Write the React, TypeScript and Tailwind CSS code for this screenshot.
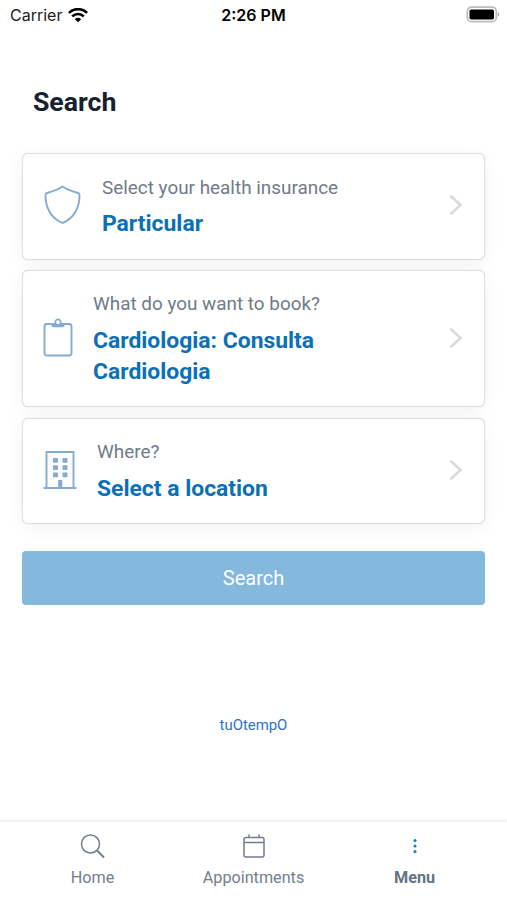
import type { ReactNode } from "react";

function Chevron() {
  return (
    <svg width="16" height="22" viewBox="0 0 16 22" fill="none" stroke="#dadada" strokeWidth="2.6" className="shrink-0">
      <path d="M2.500 1.800 L12.500 11 L2.500 20.200" />
    </svg>
  );
}

function ShieldIcon() {
  return (
    <svg width="39" height="40" viewBox="0 0 39 40" fill="none" stroke="#84abd0" strokeWidth="1.9" strokeLinejoin="round" className="shrink-0">
      <path d="M19.500 1.500 C15 4.500 9.500 6.600 4 8 Q2.500 8.400 2.500 9.900 C2.300 22.500 8.300 33.200 18.300 37.500 Q19.500 38 20.700 37.500 C30.700 33.200 36.700 22.500 36.500 9.900 Q36.500 8.400 35 8 C29.500 6.600 24 4.500 19.500 1.500 Z" />
    </svg>
  );
}

function ClipboardIcon() {
  return (
    <svg width="30" height="40" viewBox="0 0 30 40" fill="none" stroke="#84abd0" strokeWidth="1.9" className="shrink-0">
      <rect x="1.500" y="6" width="27" height="31.500" rx="2.500" />
      <path d="M8.500 5.500 H11.300 C11 -1.300 19 -1.300 18.700 5.500 H21.500 V7.500 Q21.500 9.300 19.700 9.300 H10.300 Q8.500 9.300 8.500 7.500 Z" fill="#84abd0" stroke="none" />
      <circle cx="15" cy="4.200" r="1.900" fill="#ffffff" stroke="none" />
    </svg>
  );
}

function BuildingIcon() {
  return (
    <svg width="34" height="40" viewBox="0 0 34 40" fill="none" stroke="#84abd0" strokeWidth="1.9" className="shrink-0">
      <path d="M3.500 37.500 V2 H30.500 V37.500 M0.500 38 H33.500" />
      <g fill="#84abd0" stroke="none">
        <rect x="10" y="8" width="5" height="4.800" rx="0.800" />
        <rect x="19.500" y="8" width="5" height="4.800" rx="0.800" />
        <rect x="10" y="15.300" width="5" height="4.800" rx="0.800" />
        <rect x="19.500" y="15.300" width="5" height="4.800" rx="0.800" />
        <rect x="10" y="22.500" width="5" height="4.800" rx="0.800" />
        <rect x="19.500" y="22.500" width="5" height="4.800" rx="0.800" />
        <rect x="15.200" y="30" width="4" height="8" />
      </g>
    </svg>
  );
}

function WifiIcon() {
  return (
    <svg width="20" height="15" viewBox="0 0 20 15" fill="none" stroke="#000000" strokeWidth="2.700">
      <path d="M0.900 4.900 C6 -0.100 14 -0.100 19.100 4.900" />
      <path d="M4.200 8.400 C7.500 5.200 12.500 5.200 15.800 8.400" />
      <path d="M10 14.300 L6.800 11.200 C8.600 9.400 11.400 9.400 13.200 11.200 Z" fill="#000000" stroke="none" />
    </svg>
  );
}

function BatteryIcon() {
  return (
    <svg width="34" height="18" viewBox="0 0 34 18" fill="none">
      <rect x="1.300" y="1.100" width="29" height="14.600" rx="4.200" stroke="#bcbcbc" strokeWidth="1.700" />
      <rect x="3.500" y="3.400" width="24.500" height="10" rx="1.600" fill="#000000" />
      <path d="M31.800 6.100 C33.700 7 33.700 9.800 31.800 10.700 Z" fill="#aaaaaa" />
    </svg>
  );
}

type CardProps = { icon: ReactNode; label: string; value: string };

function OptionCard({ icon, label, value }: CardProps) {
  return (
    <button className="flex w-full items-center gap-[20px] rounded-md border border-[#dfdfdf] bg-white pt-[17.500px] pr-[19.600px] pb-[19.500px] pl-[19.600px] text-left shadow-[0_4px_18px_rgba(0,0,0,0.05),0_0_1px_rgba(0,0,0,0.15)]">
      {icon}
      <span className="flex flex-1 flex-col gap-[5.500px]">
        <span className="text-[18.900px] leading-[31px] text-[#717b88]">{label}</span>
        <span className="max-w-[260px] text-[22.900px] leading-[31px] font-bold text-[#0b70b5]">{value}</span>
      </span>
      <Chevron />
    </button>
  );
}

export default function App() {
  return (
    <div className="flex h-[900px] w-[507px] flex-col bg-white font-[Roboto,sans-serif]">
      <header className="grid h-[30px] grid-cols-3 items-center font-[Inter,sans-serif] text-[16px] text-[#222]">
        <div className="flex items-center gap-[6px] pl-[10px]">
          <span>Carrier</span>
          <WifiIcon />
        </div>
        <span className="text-center font-semibold text-black">2:26 PM</span>
        <div className="flex justify-end pr-[7px]">
          <BatteryIcon />
        </div>
      </header>

      <main className="flex flex-1 flex-col px-[22.400px] pt-[51.500px]">
        <h1 className="pl-[10.500px] text-[26.700px] leading-[40px] font-bold text-[#18222f]">Search</h1>
        <section className="flex flex-col gap-[10.300px] pt-[31.500px]">
          <OptionCard icon={<ShieldIcon />} label="Select your health insurance" value="Particular" />
          <OptionCard icon={<ClipboardIcon />} label="What do you want to book?" value="Cardiologia: Consulta Cardiologia" />
          <OptionCard icon={<BuildingIcon />} label="Where?" value="Select a location" />
        </section>
        <button className="mt-[27px] h-[54px] w-full rounded bg-[#84b8dc] text-[20px] text-white">Search</button>
        <a className="mt-[110px] text-center text-[14.900px] leading-[20px] text-[#2e70cb]">tuOtempO</a>
      </main>

      <nav className="flex h-[79px] justify-center border-t border-[#f1f1f1] pt-[10px] text-[16.200px] leading-[24px] text-[#747e8d] shadow-[0_-1px_3px_rgba(0,0,0,0.08)]">
        <div className="flex w-[161px] flex-col items-center gap-[6px]">
          <svg width="26" height="28" viewBox="0 0 26 28" fill="none" stroke="#747e8d" strokeWidth="1.500">
            <circle cx="10.500" cy="12" r="9" />
            <path d="M17 18.500 L24 25.500" strokeWidth="2" />
          </svg>
          <span>Home</span>
        </div>
        <div className="flex w-[161px] flex-col items-center gap-[6px]">
          <svg width="24" height="28" viewBox="0 0 24 28" fill="none" stroke="#747e8d" strokeWidth="1.500">
            <rect x="2" y="5.500" width="20" height="19.500" rx="2" />
            <path d="M2 10.500 H22 M7 2.500 V5.500 M17 2.500 V5.500" />
          </svg>
          <span>Appointments</span>
        </div>
        <div className="flex w-[161px] flex-col items-center gap-[6px] font-bold">
          <svg width="24" height="28" viewBox="0 0 24 28" fill="#0b7cbd">
            <circle cx="12" cy="8.500" r="1.500" />
            <circle cx="12" cy="14" r="1.500" />
            <circle cx="12" cy="19.500" r="1.500" />
          </svg>
          <span className="text-[#667381]">Menu</span>
        </div>
      </nav>
    </div>
  );
}
